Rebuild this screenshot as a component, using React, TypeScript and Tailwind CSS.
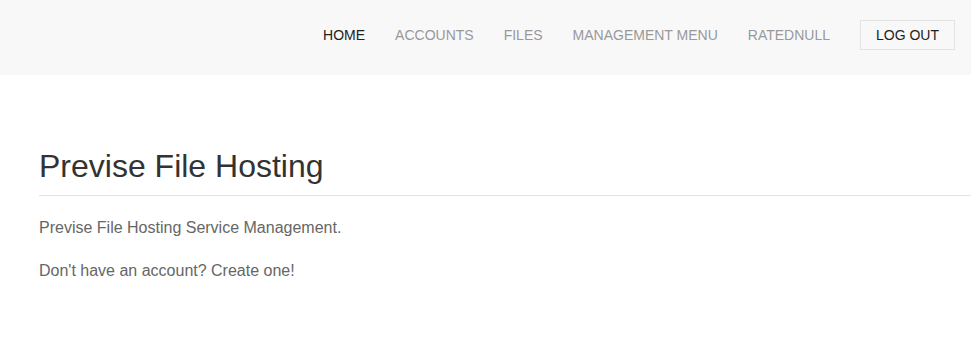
import React from "react";

const links = [
  { label: "HOME", active: true },
  { label: "ACCOUNTS", active: false },
  { label: "FILES", active: false },
  { label: "MANAGEMENT MENU", active: false },
  { label: "RATEDNULL", active: false },
];

const App = () => {
  return (
    <div className="min-h-screen bg-white font-['Liberation_Sans',Arial,sans-serif]">
      <header className="h-[75px] bg-[#f8f8f8] flex items-center justify-end pr-4 pb-[5px]">
        <nav className="flex items-center gap-[30px]">
          {links.map((link) => (
            <a
              key={link.label}
              href="#"
              className={`text-[14px] leading-none ${
                link.active ? "text-[#222222]" : "text-[#999999]"
              }`}
            >
              {link.label}
            </a>
          ))}
          <button className="h-[30px] px-[15px] border border-[#e3e3e3] text-[14px] leading-none text-[#222222]">
            LOG OUT
          </button>
        </nav>
      </header>

      <main className="pl-[39px] pt-[71px]">
        <h1 className="text-[32px] leading-[40px] text-[#333333] pb-[9px] border-b border-[#e2e2e2]">
          Previse File Hosting
        </h1>
        <p className="mt-[20px] text-[16px] leading-[24px] text-[#666666]">
          Previse File Hosting Service Management.
        </p>
        <p className="mt-[19px] text-[16px] leading-[24px] text-[#666666]">
          Don't have an account? Create one!
        </p>
      </main>
    </div>
  );
};

export default App;
